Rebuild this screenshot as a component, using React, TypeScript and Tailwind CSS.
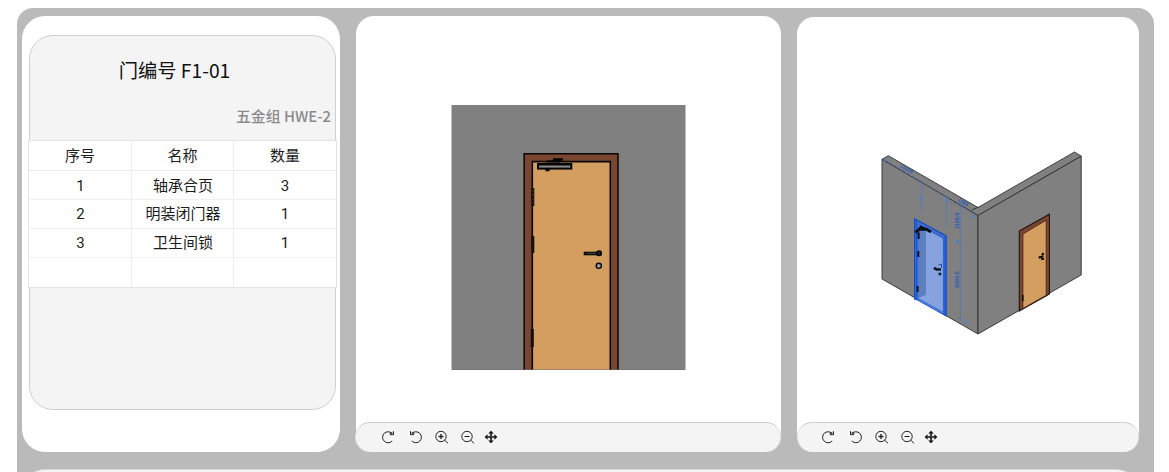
import React from "react";

const rows: string[][] = [
  ["1", "轴承合页", "3"],
  ["2", "明装闭门器", "1"],
  ["3", "卫生间锁", "1"],
  ["", "", ""],
];

const cell = "flex items-center justify-center border-r border-[#ececec] last:border-r-0";

function HardwareTable() {
  return (
    <div className="-mr-0.5 -ml-0.5 mt-3 border border-[#e4e4e4] bg-white text-[15px] leading-[18px] text-[#1c1c1c]">
      <div className="grid h-[30px] grid-cols-[103px_102px_1fr] border-b border-[#ececec]">
        {["序号", "名称", "数量"].map((h) => (
          <div key={h} className={cell}>{h}</div>
        ))}
      </div>
      {rows.map((r, i) => (
        <div key={i} className="grid h-[29px] grid-cols-[103px_102px_1fr] border-b border-[#f0f0f0] last:border-b-0">
          {r.map((c, j) => (
            <div key={j} className={`${cell} ${i === 0 ? "pt-0.5" : ""} ${j < 2 ? "pl-px" : ""}`}>{c}</div>
          ))}
        </div>
      ))}
    </div>
  );
}

function Rotate({ flip = false }: { flip?: boolean }) {
  return (
    <svg className={flip ? "h-3.5 w-3.5 -scale-x-100" : "h-3.5 w-3.5"} viewBox="0 0 14 14" fill="none" stroke="#222" strokeWidth="1">
      <path d="M11.2 3.6A5.5 5.5 0 1 0 11.2 10.9" />
      <path d="M12.5 1.2V4.7H9.3L9.2 2.9H11.4" />
    </svg>
  );
}

function Magnifier({ plus = false }: { plus?: boolean }) {
  return (
    <svg className="h-3.5 w-3.5" viewBox="0 0 14 14" fill="none" stroke="#222" strokeWidth="1">
      <circle cx="6" cy="6.5" r="5.2" />
      <path d="M9.8 10.2L13.2 13.5" />
      <path d="M3.5 6.5H8.5" strokeWidth={plus ? 1.4 : 1} />
      {plus && <path d="M6 4V9" strokeWidth="1.4" />}
    </svg>
  );
}

function Move() {
  return (
    <svg className="h-3.5 w-3.5" viewBox="0 0 14 14" fill="#111" stroke="#111" strokeWidth=".5">
      <path d="M6.4 3.3H4.8L7 .9 9.2 3.3H7.6V6.4H10.7V4.8L13.1 7 10.7 9.2V7.6H7.6V10.7H9.2L7 13.1 4.8 10.7H6.4V7.6H3.3V9.2L.9 7 3.3 4.8V6.4H6.4Z" />
    </svg>
  );
}

function Toolbar({ wide = false }: { wide?: boolean }) {
  return (
    <div className={`${wide ? "-ml-px pl-[25px]" : "pl-[23px]"} flex h-[30px] items-center rounded-[15px] border-t border-x border-t-[#cfcfcf] border-x-[#e0e0e0] bg-[#f4f4f4] pb-px`}>
      <Rotate />
      <div className="ml-3.5 flex"><Rotate flip /></div>
      <div className="ml-3 flex"><Magnifier plus /></div>
      <div className="ml-3 flex"><Magnifier /></div>
      <div className="ml-[9px] flex"><Move /></div>
    </div>
  );
}

function DoorElevation() {
  return (
    <svg width="235" height="265" viewBox="451 105 235 265">
      <rect x="451.5" y="105" width="234" height="265" fill="#808080" />
      <path d="M524.2 370V153.7H618V370" fill="#794632" stroke="#090706" strokeWidth="1.5" />
      <path d="M532.3 370V161.6H610.3V370" fill="#d39e5f" stroke="#090706" strokeWidth="1.6" />
      <path d="M452 369.5H685" stroke="#707070" opacity=".5" />
      <rect x="538" y="164" width="33.3" height="4.6" fill="#8b8b8b" stroke="#050505" strokeWidth="2" />
      <path d="M538 164.4H571.5M547 161.4H560M553 159.5H563M545.5 170H549.5" stroke="#050505" strokeWidth="2.4" fill="none" />
      <path d="M532.8 188V206M532.8 236V253M532.3 329V347" stroke="#111" strokeWidth="3" />
      <path d="M532.5 191H534.5M532.5 195H534.5M532.5 199H534.5M532.5 203H534.5" stroke="#8a6840" strokeWidth=".6" />
      <path d="M585.5 253.5H600" stroke="#0b0b0b" strokeWidth="3.6" strokeLinecap="square" />
      <path d="M587 253.4H599" stroke="#444" strokeWidth="1" />
      <circle cx="599" cy="253.3" r="2.4" fill="#222" stroke="#000" strokeWidth="1.2" />
      <circle cx="598.8" cy="265.8" r="2.6" fill="#9b9b9b" stroke="#080808" strokeWidth="1.4" />
    </svg>
  );
}

function CornerView() {
  return (
    <svg width="204" height="188" viewBox="880 149 204 188">
      <g stroke="#303030" strokeWidth=".9" strokeLinejoin="round" fill="#808080">
        <path d="M882 159.3L888.3 155.7L978 207.5L1074.5 152L1081.2 156.2L978 215.5Z" />
        <path d="M882 159.3L978 215.5V334L882 279Z" />
        <path d="M978 215.5L1081.2 156.2V275L978 334Z" />
        <path d="M971.5 210L978.3 207.2" fill="none" />
      </g>
      <path d="M1019.3 231L1049.4 214.2V294L1046 296L1022.8 309L1019.3 311Z" fill="#794632" stroke="#24130e" strokeWidth="1.1" />
      <path d="M1022.9 234L1046.2 220.2V295.2L1022.9 308.5Z" fill="#d39e5f" stroke="#3c2117" strokeWidth=".8" />
      <path d="M1022.8 295V301" stroke="#111" strokeWidth="1.6" />
      <path d="M1038.7 257.6L1043.5 256.2M1042 255.5L1043.5 253M1041.2 259H1044" stroke="#111" strokeWidth="2.2" />

      <path d="M914.6 218.8L946.2 235.9V315.7L942.8 314L917.8 300L914.6 299Z" fill="#416fce" stroke="#174dc2" strokeWidth="1.2" />
      <path d="M918.2 224.2L943.4 238.4V312.5L918.2 298.5Z" fill="#86a3e0" stroke="#275dcc" strokeWidth=".9" />
      <path d="M918.7 224.7L926 228.5V295L918.7 298.5Z" fill="#5e7fbe" />
      <path d="M918.7 298.5L926 295.2" stroke="#91aae0" strokeWidth=".8" />
      <path d="M919 299.7L943 312.9" stroke="#4e79dc" strokeWidth="2" />
      <path d="M916.4 221V299M944.9 237V314" stroke="#1b57da" strokeWidth="1.2" />
      <path d="M915.5 232.5L919.5 229L926.5 229.3L931 232M919.5 226.5L925 229" stroke="#08101d" strokeWidth="3" fill="none" />
      <path d="M918.6 232.5V239M918.3 251V257M917.6 286V292" stroke="#0b1220" strokeWidth="2" />
      <path d="M933.8 268L937 269.5H941M938.6 274H941.2" stroke="#101725" strokeWidth="2.6" fill="none" />
      <path d="M938.5 265L941.4 264V268" stroke="#2b4d91" fill="none" />

      <g stroke="#4777c8" strokeWidth=".7" fill="none">
        <path d="M921.5 182V213M946.5 195V227M960.3 203V320" />
        <path d="M883 159L976 215" strokeDasharray="3 2" />
        <g fill="#6794ca">
          <circle cx="885" cy="160" r="1" />
          <rect x="920.6" y="196.8" width="2" height="2" />
          <rect x="945.5" y="199.7" width="2" height="2" />
          <rect x="956.5" y="240.5" width="2" height="2" />
          <circle cx="974.5" cy="216.7" r="1.2" />
          <circle cx="965" cy="322.5" r="1.2" />
          <path d="M958.5 242L962 245M958.5 317L962 321" />
        </g>
      </g>
      <g fill="#285bb8" className="font-['Liberation_Sans'] font-bold">
        <text transform="translate(900 167) rotate(30)" fontSize="5">11055</text>
        <text transform="translate(957.5 201) rotate(30)" fontSize="5">1055</text>
        <text transform="translate(958.5 229) rotate(-90)" fontSize="5.5">1108.0</text>
        <text transform="translate(958.5 288) rotate(-90)" fontSize="5.5">2000.0</text>
      </g>
    </svg>
  );
}

export default function App() {
  return (
    <main className="h-[472px] w-[1169px] overflow-hidden bg-white pl-[17px] pt-2 font-[Roboto,'Noto_Sans_CJK_SC',sans-serif]">
      <div className="h-[500px] w-[1137px] rounded-t-[16px] bg-[#bababa] pl-[5px] pt-2">
        <div className="flex h-[436px]">
          <section className="h-[436px] w-[318px] rounded-[23px] bg-white pl-[7px] pr-1 pt-[19px]">
            <div className="h-[375px] rounded-[24px] border border-[#cfcfcf] bg-[#f4f4f4]">
              <h1 className="mt-5 mr-4 text-center font-['Noto_Sans_CJK_SC'] text-[19.3px] leading-7 text-[#111]">门编号 F1-01</h1>
              <p className="mt-5 pr-1 text-right font-['Noto_Sans_CJK_SC'] text-[14.9px] leading-6 font-medium text-[#8b8b8b]">五金组 HWE-2</p>
              <HardwareTable />
            </div>
          </section>
          <section className="ml-4 flex h-[436px] w-[425px] flex-col rounded-[18px] bg-white">
            <div className="flex h-[406px] pl-[95px] pt-[89px]"><DoorElevation /></div>
            <Toolbar wide />
          </section>
          <section className="mt-px ml-4 flex h-[435px] w-[342px] flex-col rounded-[17px] bg-white">
            <div className="h-[405px] pl-[83px] pt-[132px]"><CornerView /></div>
            <Toolbar />
          </section>
        </div>
        <section className="mt-[17px] h-10 w-[1117px] rounded-t-[23px] border-t border-[#d8d8d8] bg-[#f4f4f4]" />
      </div>
    </main>
  );
}
